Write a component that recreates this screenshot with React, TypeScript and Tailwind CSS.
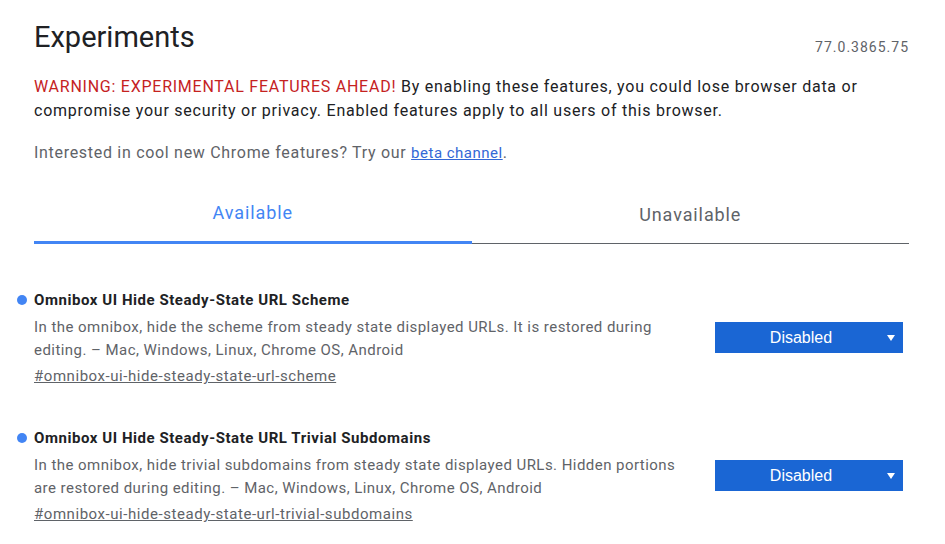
import React from 'react';

const experiments = [
  {
    name: 'Omnibox UI Hide Steady-State URL Scheme',
    description:
      'In the omnibox, hide the scheme from steady state displayed URLs. It is restored during editing. – Mac, Windows, Linux, Chrome OS, Android',
    link: '#omnibox-ui-hide-steady-state-url-scheme',
  },
  {
    name: 'Omnibox UI Hide Steady-State URL Trivial Subdomains',
    description:
      'In the omnibox, hide trivial subdomains from steady state displayed URLs. Hidden portions are restored during editing. – Mac, Windows, Linux, Chrome OS, Android',
    link: '#omnibox-ui-hide-steady-state-url-trivial-subdomains',
  },
];

function SelectButton() {
  return (
    <div className="flex h-[31px] w-[188px] items-center bg-[#1a66d4] text-white font-['Liberation_Sans',Arial,sans-serif]">
      <span className="flex-1 text-center text-[16px]">Disabled</span>
      <svg width="8" height="6" viewBox="0 0 8 6" className="mr-[8px]">
        <polygon points="0,0 8,0 4,6" fill="white" />
      </svg>
    </div>
  );
}

export default function App() {
  return (
    <div className="min-h-screen bg-white pl-[34px] pr-[36px] pt-[20px] font-['Roboto',sans-serif] text-[#202124]">
      {/* Header */}
      <div className="flex items-start justify-between">
        <h1 className="text-[29px] leading-[34px] font-normal">Experiments</h1>
        <span className="mt-[17px] text-[14px] leading-[20px] tracking-[1px] text-[#5f6368]">77.0.3865.75</span>
      </div>

      <p className="mt-[18px] text-[16px] leading-[24px] tracking-[0.75px]">
        <span className="text-[#c5221f]">WARNING: EXPERIMENTAL FEATURES AHEAD!</span> By enabling these features, you
        could lose browser data or compromise your security or privacy. Enabled features apply to all users of this
        browser.
      </p>

      <p className="mt-[18px] text-[16px] leading-[24px] tracking-[0.7px] text-[#5f6368]">
        Interested in cool new Chrome features? Try our{' '}
        <a className="text-[15px] tracking-[0.5px] text-[#3367d6] underline">beta channel</a>.
      </p>

      {/* Tabs */}
      <div className="mt-[36px] flex items-end">
        <div className="flex-1 border-b-[3px] border-[#4285f4] pb-[16px] text-center text-[18px] leading-[24px] tracking-[0.9px] text-[#4285f4]">
          Available
        </div>
        <div className="flex-1 border-b border-[#5f6368] pb-[16px] text-center text-[18px] leading-[24px] tracking-[0.9px] text-[#5f6368]">
          Unavailable
        </div>
      </div>

      {/* Experiments */}
      <div className="mt-[46px] flex flex-col gap-[40px]">
        {experiments.map((e) => (
          <div key={e.link}>
            <div className="-ml-[17px] flex items-center">
              <span className="mr-[7px] h-[10px] w-[10px] rounded-full bg-[#4285f4]" />
              <h2 className="text-[15px] font-bold leading-[20px] tracking-[0.55px]">{e.name}</h2>
            </div>
            <div className="mt-[6px] flex items-start justify-between">
              <div className="w-[665px] text-[15px] tracking-[0.45px] text-[#5f6368]">
                <p className="leading-[23px]">{e.description}</p>
                <a className="mt-[3px] block leading-[23px] tracking-[0.55px] underline">{e.link}</a>
              </div>
              <div className="mr-[6px] mt-[6px]">
                <SelectButton />
              </div>
            </div>
          </div>
        ))}
      </div>
    </div>
  );
}
